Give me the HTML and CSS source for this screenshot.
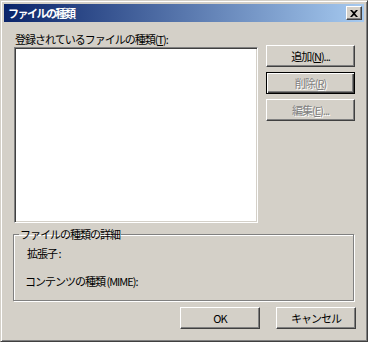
FILE: index.html
```html
<!DOCTYPE html>
<html lang="ja">
<head>
    <meta charset="UTF-8">
    <meta name="viewport" content="width=device-width, initial-scale=1.0">
    <title>ファイルの種類</title>
    <link rel="stylesheet" href="styles.css">
</head>
<body>
    <div class="window">
        <div class="title-bar">
            <span class="title-text">ファイルの種類</span>
            <button class="close-btn" type="button">
                <svg width="8" height="7" viewBox="0 0 8 7">
                    <path d="M0 0h2l2 2 2-2h2L5 3.5 8 7H6L4 5 2 7H0l3-3.5z" fill="#000"/>
                </svg>
            </button>
        </div>
        <div class="dialog-body">
            <div class="top-area">
                <div class="list-column">
                    <label class="list-label">登録されているファイルの種類(<u>T</u>):</label>
                    <div class="listbox"></div>
                </div>
                <div class="side-buttons">
                    <button class="btn" type="button">追加(<u>N</u>)...</button>
                    <button class="btn disabled focused" type="button">削除(<u>R</u>)</button>
                    <button class="btn disabled" type="button">編集(<u>E</u>)...</button>
                </div>
            </div>
            <fieldset class="group-box">
                <legend>ファイルの種類の詳細</legend>
                <div class="detail-row ext">拡張子 :</div>
                <div class="detail-row mime">コンテンツの種類 (MIME):</div>
            </fieldset>
            <div class="bottom-buttons">
                <button class="btn wide" type="button">OK</button>
                <button class="btn wide" type="button">キャンセル</button>
            </div>
        </div>
    </div>
</body>
</html>
```

FILE: styles.css
```css
html, body {
    margin: 0;
    padding: 0;
    background: #d4d0c8;
}

body {
    font-family: "Noto Sans CJK JP", "Noto Sans", sans-serif;
    font-size: 11px;
    letter-spacing: -1px;
    color: #000;
}

.window {
    width: 368px;
    height: 342px;
    box-sizing: border-box;
    border: 1px solid;
    border-color: #d4d0c8 #404040 #404040 #d4d0c8;
    box-shadow: inset 1px 1px #fff, inset -1px -1px #808080;
    padding: 3px;
    background: #d4d0c8;
}

.title-bar {
    height: 18px;
    display: flex;
    align-items: center;
    justify-content: space-between;
    padding: 0 2px 0 4px;
    background: linear-gradient(to right, #0a246a, #a6caf0);
}

.title-text {
    color: #fff;
    font-weight: bold;
    letter-spacing: -1.5px;
    line-height: 18px;
}

.close-btn {
    width: 16px;
    height: 14px;
    padding: 0;
    display: flex;
    align-items: center;
    justify-content: center;
    background: #d4d0c8;
    border: 1px solid;
    border-color: #fff #404040 #404040 #fff;
    box-shadow: inset -1px -1px #808080;
}

.dialog-body {
    padding: 10px 0 0 10px;
}

.top-area {
    display: flex;
    gap: 8px;
}

.list-column {
    width: 244px;
}

.list-label {
    display: block;
    height: 14px;
    line-height: 14px;
    margin-left: 1px;
    margin-bottom: 1px;
}

.listbox {
    height: 176px;
    box-sizing: border-box;
    background: #fff;
    border: 1px solid;
    border-color: #808080 #fff #fff #808080;
    box-shadow: inset 1px 1px #404040, inset -1px -1px #d4d0c8;
}

.side-buttons {
    padding-top: 13px;
    display: flex;
    flex-direction: column;
    gap: 5px;
}

.btn {
    width: 89px;
    height: 22px;
    padding: 0;
    font-family: inherit;
    font-size: 11px;
    letter-spacing: -1px;
    color: #000;
    background: #d4d0c8;
    border: 1px solid;
    border-color: #fff #404040 #404040 #fff;
    box-shadow: inset -1px -1px #808080;
    line-height: 18px;
}

.btn.disabled {
    color: #808080;
    text-shadow: 1px 1px #fff;
}

.btn.focused {
    border-color: #000;
    box-shadow: inset 1px 1px #fff, inset -1px -1px #404040, inset -2px -2px #808080;
}

.group-box {
    margin: 5px 0 0 -1px;
    width: 341px;
    height: 73px;
    box-sizing: border-box;
    padding: 6px 0 0 0;
    border: 1px solid #808080;
    box-shadow: inset 1px 1px #fff, 1px 1px #fff;
}

.group-box legend {
    padding: 0 1px;
    margin-left: 5px;
    line-height: 12px;
}

.detail-row {
    height: 14px;
    line-height: 14px;
    margin-left: 13px;
}

.detail-row.mime {
    margin-top: 14px;
    margin-left: 11px;
}

.bottom-buttons {
    display: flex;
    gap: 16px;
    margin-top: 6px;
    padding-left: 166px;
}

.btn.wide {
    width: 80px;
}
```
